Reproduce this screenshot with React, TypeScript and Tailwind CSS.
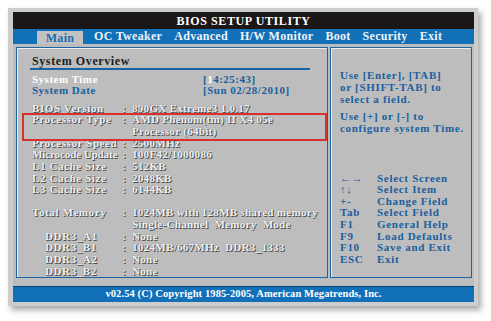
const serif = "font-['Liberation_Serif','Times_New_Roman',serif]";
const grey = "text-[#f2f2f2] [text-shadow:1px_1px_0_#4c4c4c,0_0_1px_#6a6a6a]";
const blue = "text-[#1b5f9e]";

type Info = { label: string; value?: string; indent?: boolean; cont?: boolean; tight?: boolean };

const cpuRows: Info[] = [
  { label: "BIOS Version", value: "890GX Extreme3 1.0.17" },
  { label: "Processor Type", value: "AMD Phenom(tm) II X4 05e" },
  { label: "", value: "Processor (64bit)", cont: true },
  { label: "Processor Speed", value: "2500MHz" },
  { label: "Microcode Update", value: "100F42/1000086", tight: true },
  { label: "L1 Cache Size", value: "512KB" },
  { label: "L2 Cache Size", value: "2048KB" },
  { label: "L3 Cache Size", value: "6144KB" },
];

const memRows: Info[] = [
  { label: "Total Memory", value: "1024MB with 128MB shared memory" },
  { label: "", value: "Single-Channel  Memory  Mode", cont: true },
  { label: "DDR3_A1", value: "None", indent: true },
  { label: "DDR3_B1", value: "1024MB/667MHz  DDR3_1333", indent: true },
  { label: "DDR3_A2", value: "None", indent: true },
  { label: "DDR3_B2", value: "None", indent: true },
];

const keys = [
  ["←→", "Select Screen"],
  ["↑↓", "Select Item"],
  ["+-", "Change Field"],
  ["Tab", "Select Field"],
  ["F1", "General Help"],
  ["F9", "Load Defaults"],
  ["F10", "Save and Exit"],
  ["ESC", "Exit"],
];

const tabs = ["OC Tweaker", "Advanced", "H/W Monitor", "Boot", "Security", "Exit"];

function InfoRow({ row }: { row: Info }) {
  return (
    <div className="flex whitespace-pre">
      <span
        className={`w-[90px] shrink-0 ${row.indent ? "pl-[13px]" : ""} ${
          row.tight ? "tracking-[-0.1px]" : "tracking-[0.6px]"
        }`}
      >
        {row.label}
      </span>
      <span className="w-[10px] shrink-0">{row.cont ? "" : ":"}</span>
      <span>{row.value}</span>
    </div>
  );
}

export default function App() {
  return (
    <div className={`w-[491px] h-[321px] bg-white pt-[8px] pl-[8px] ${serif}`}>
      <div className="w-[470px] h-[298px] bg-[#cdcdcd] pt-[4px] pl-[5px] shadow-[3px_4px_6px_rgba(0,0,0,0.35)]">
        <div className="w-[461px] h-[290px] flex flex-col bg-[#bdbdbd]">
          {/* title */}
          <div className="h-[17px] bg-[#1a1716] flex items-center justify-center text-white font-bold text-[12px] tracking-[0.6px] leading-none pt-[1px]">
            BIOS SETUP UTILITY
          </div>
          {/* tabs */}
          <div className="h-[15px] bg-[#1170b8] flex items-end pl-[24px] text-[12px] font-bold leading-none tracking-[0.3px]">
            <div className="h-[13px] w-[46px] bg-[#c2c2c2] text-[#1b6db0] flex items-center justify-center pt-[1px]">
              Main
            </div>
            <div className="flex gap-[12px] pl-[11px] h-[15px] items-center text-[#eef3f8]">
              {tabs.map((t) => (
                <span key={t}>{t}</span>
              ))}
            </div>
          </div>
          {/* body */}
          <div className="flex-1 flex gap-[2px] pt-[3px] pl-[3px] pr-[2px] pb-[8px]">
            {/* left panel */}
            <div className="relative w-[312px] border border-[#1a64a6] shadow-[inset_1px_1px_0_#e8eef4] pl-[15px] pt-[6px] font-bold text-[11px] tracking-[0.3px]">
              <div className="text-[#1c1c1c] text-[12px] leading-[14px] tracking-[0.6px]">System Overview</div>
              <div className="h-[2px] bg-[#1a64a6] w-[280px] -ml-[2px]"></div>
              <div className="mt-[4px] leading-[11.5px] tracking-[0.5px]">
                <div className="flex">
                  <span className="w-[171px] text-white">System Time</span>
                  <span className={blue}>
                    [<span className="text-white">1</span>4:25:43]
                  </span>
                </div>
                <div className="flex">
                  <span className={`w-[171px] ${blue}`}>System Date</span>
                  <span className={blue}>[Sun 02/28/2010]</span>
                </div>
              </div>
              <div className={`mt-[6px] leading-[11.7px] ${grey}`}>
                {cpuRows.map((r, i) => (
                  <InfoRow key={i} row={r} />
                ))}
              </div>
              <div className={`mt-[11px] leading-[11.7px] ${grey}`}>
                {memRows.map((r, i) => (
                  <InfoRow key={i} row={r} />
                ))}
              </div>
              {/* highlight box */}
              <div className="absolute left-[5px] top-[65px] w-[305px] h-[28px] border-2 border-[#d8302c]"></div>
            </div>
            {/* right panel */}
            <div className="flex-1 border border-[#1a64a6] shadow-[inset_1px_1px_0_#e8eef4] pl-[9px] pt-[21px] font-bold text-[11px] tracking-[0.7px] leading-[12px] text-[#1b5f9e]">
              <div>Use [Enter], [TAB]</div>
              <div>or [SHIFT-TAB] to</div>
              <div>select a field.</div>
              <div className="mt-[5px]">Use [+] or [-] to</div>
              <div>configure system Time.</div>
              <div className="mt-[39px] leading-[11.6px]">
                {keys.map(([k, d]) => (
                  <div key={k} className="flex">
                    <span className="w-[37px]">{k}</span>
                    <span>{d}</span>
                  </div>
                ))}
              </div>
            </div>
          </div>
          {/* footer */}
          <div className="h-[16px] bg-[#1170b8] border-t border-[#0b3f6e] flex items-center justify-center text-white font-bold text-[10.5px] tracking-[0.1px] leading-none">
            v02.54 (C) Copyright 1985-2005, American Megatrends, Inc.
          </div>
        </div>
      </div>
    </div>
  );
}
